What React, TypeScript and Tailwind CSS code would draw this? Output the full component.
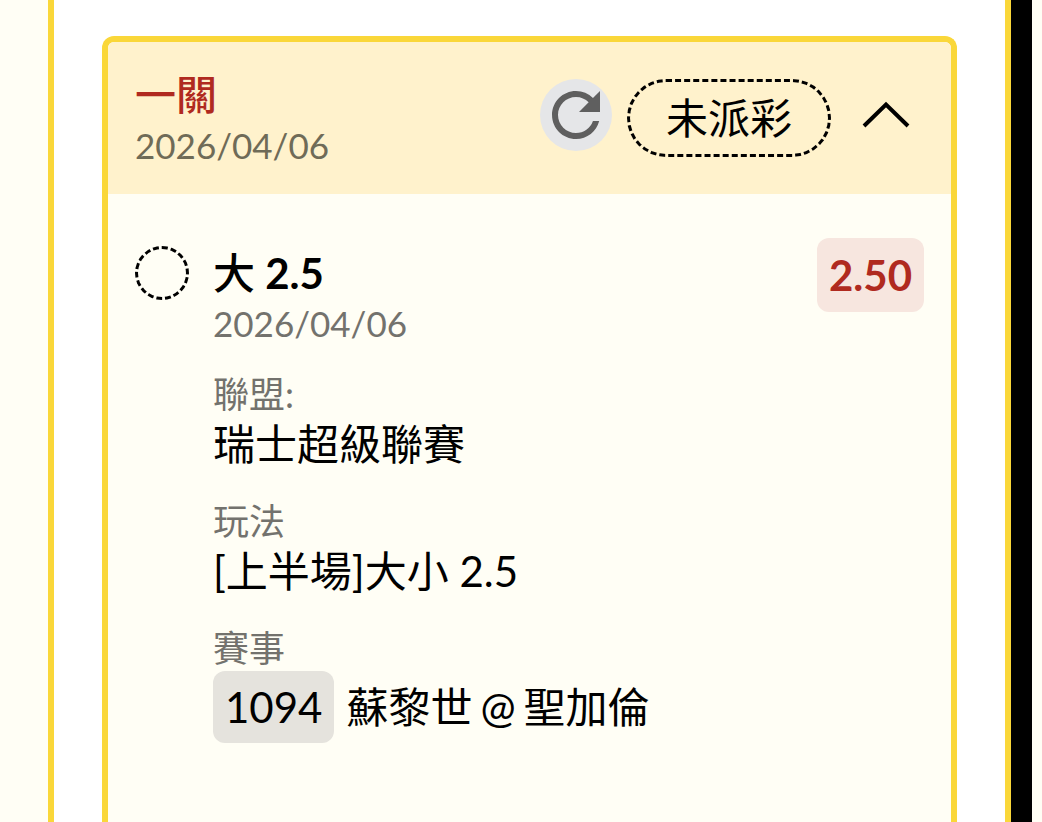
import { MdRefresh } from "react-icons/md";

const details = [
  { label: "聯盟:", value: "瑞士超級聯賽" },
  { label: "玩法", value: "[上半場]大小 2.5" },
];

const ChevronUp = () => (
  <svg
    viewBox="0 0 48 28"
    className="w-12 h-7"
    fill="none"
    stroke="currentColor"
    strokeWidth="4"
    aria-hidden="true"
  >
    <path d="M2 25L24 3.5L46 25" />
  </svg>
);

const BetHeader = () => (
  <header className="flex items-center justify-between h-[152px] pl-[27px] pr-[41px] bg-[#fff2cc]">
    <div className="pt-1">
      <h2 className="text-[41px] leading-[50px] font-medium text-[#b02a1f]">一關</h2>
      <p className="text-[35px] leading-[50px] text-[#6f6b57]">2026/04/06</p>
    </div>
    <div className="flex items-start gap-[15px]">
      <button
        type="button"
        aria-label="重新整理"
        className="size-[72px] rounded-full bg-[#e5e6e8] text-[#5f5f5f]"
      >
        <MdRefresh className="size-[72px]" />
      </button>
      <span className="flex items-center justify-center w-[204px] h-[78px] rounded-full border-3 border-dashed border-black text-[42px]">
        未派彩
      </span>
      <button type="button" aria-label="收合" className="flex items-center h-[72px] ml-4">
        <ChevronUp />
      </button>
    </div>
  </header>
);

const BetSelection = () => (
  <section className="flex items-start gap-6 px-[27px] pt-11">
    <div className="shrink-0 size-[54px] mt-2 rounded-full border-3 border-dashed border-black" />
    <div className="flex-1 pt-[10px]">
      <h3 className="text-[42px] leading-[50px] font-bold">
        <span className="font-medium">大</span> 2.5
      </h3>
      <p className="text-[35px] leading-[50px] text-[#73726d]">2026/04/06</p>
      <dl className="mt-6 flex flex-col gap-[27px]">
        {details.map((item) => (
          <div key={item.label}>
            <dt className="text-[36px] leading-[45px] text-[#73726d]">{item.label}</dt>
            <dd className="text-[42px] leading-[55px]">{item.value}</dd>
          </div>
        ))}
        <div>
          <dt className="text-[36px] leading-[45px] text-[#73726d]">賽事</dt>
          <dd className="flex items-center gap-2 text-[42px]">
            <span className="h-[72px] px-3 mr-1 rounded-xl bg-[#e5e3dd] leading-[72px]">1094</span>
            <span>蘇黎世</span>
            <span>@</span>
            <span>聖加倫</span>
          </dd>
        </div>
      </dl>
    </div>
    <strong className="h-[74px] px-3 rounded-xl bg-[#f7e6df] text-[42px] leading-[74px] font-bold text-[#b02a1f]">
      2.50
    </strong>
  </section>
);

export default function App() {
  return (
    <div
      lang="zh-Hant"
      className="flex min-h-screen pl-12 pr-[10px] bg-[#fffef5] text-black font-[Lato,'Noto_Sans_CJK_TC',sans-serif]"
    >
      <main className="flex flex-1 px-12 pt-9 bg-white border-x-6 border-[#fad739]">
        <article className="flex-1 overflow-hidden rounded-t-xl border-6 border-b-0 border-[#fad739] bg-[#fffef5]">
          <BetHeader />
          <BetSelection />
        </article>
      </main>
      <div className="w-[21px] bg-black" />
    </div>
  );
}
